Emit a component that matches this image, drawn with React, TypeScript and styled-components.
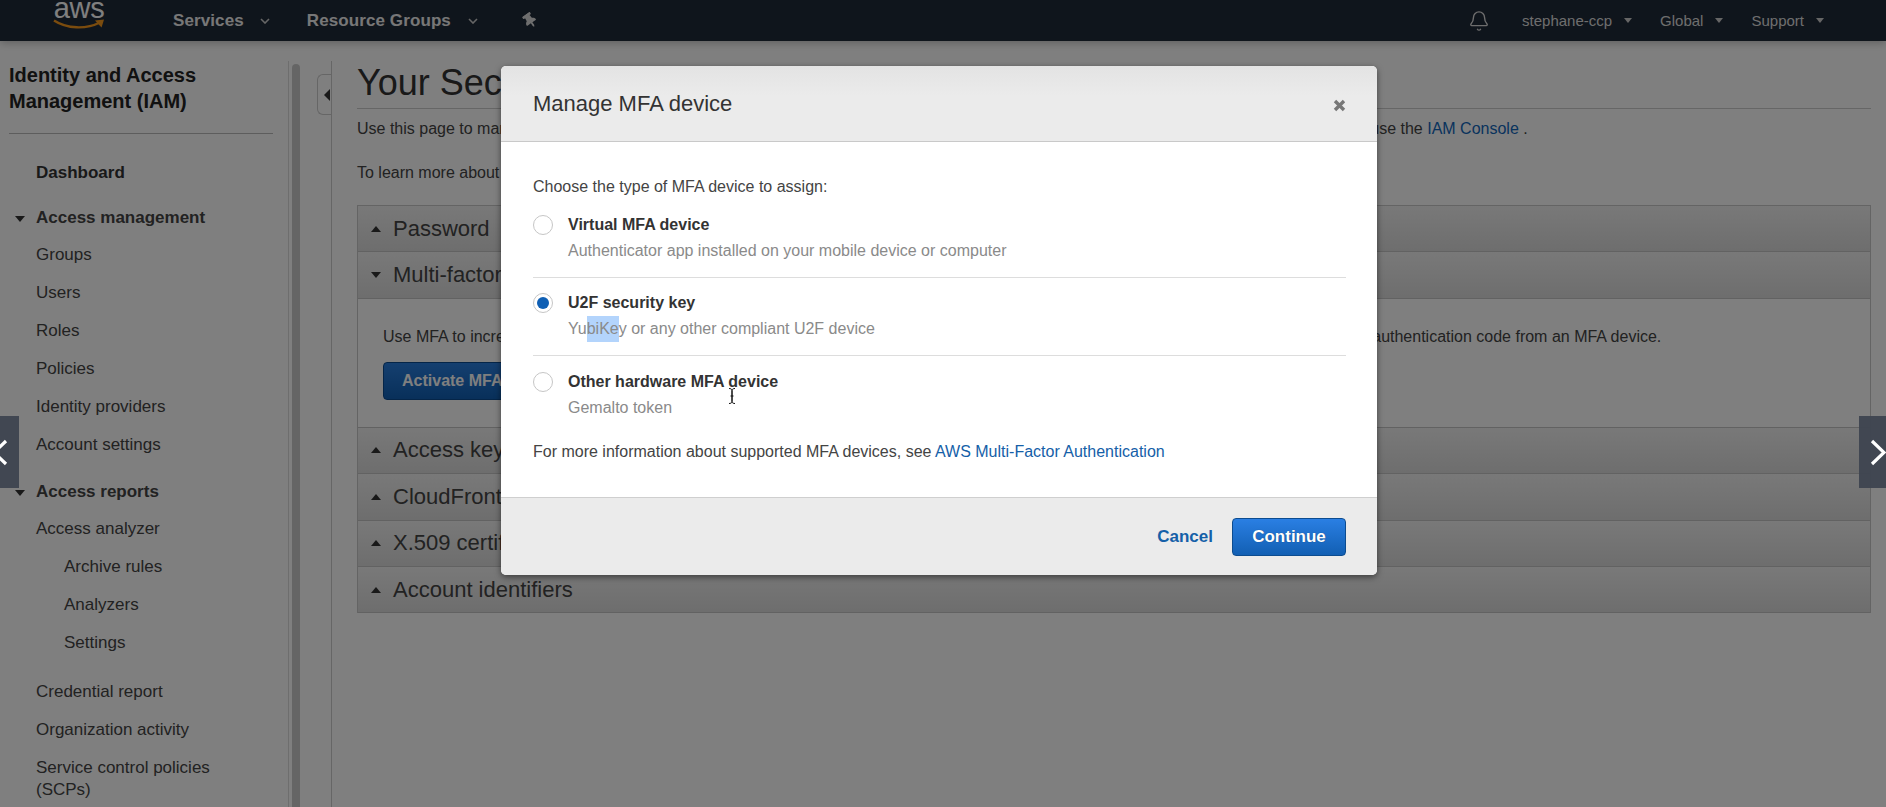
import React from "react";
import styled, { createGlobalStyle } from "styled-components";
import { Bell } from "lucide-react";
import { FaThumbtack } from "react-icons/fa";

const Global = createGlobalStyle`
  html, body { margin: 0; padding: 0; height: 100%; overflow: hidden; background: #fff; }
  body { font-family: "Liberation Sans", Arial, sans-serif; font-size: 16px; color: #444; }
  * { box-sizing: border-box; }
`;

const Page = styled.div`
  position: relative;
  width: 100vw;
  height: 100vh;
  overflow: hidden;
  display: flex;
  flex-direction: column;
`;

const TopBar = styled.header`
  height: 41px;
  flex: none;
  display: flex;
  align-items: center;
  background: #1f2a38;
  color: #fff;
  box-shadow: 0 2px 8px rgba(0, 0, 0, 0.25);
  position: relative;
  z-index: 1;
`;
const Logo = styled.div`
  width: 52px;
  height: 41px;
  margin-left: 53px;
  position: relative;
  overflow: hidden;
  flex: none;
`;
const LogoWord = styled.span`
  display: block;
  font-size: 29px;
  line-height: 22px;
  margin-top: -3px;
  text-align: center;
  letter-spacing: -0.3px;
  color: #fff;
`;
const Smile = styled.svg`
  display: block;
  width: 52px;
  height: 12px;
  margin-top: -1px;
`;
const MenuLabel = styled.span<{ $left: number }>`
  margin-left: ${(p) => p.$left}px;
  font-size: 17px;
  font-weight: bold;
  color: #eee;
  letter-spacing: 0.1px;
  white-space: nowrap;
`;
const MenuChevron = styled.svg<{ $left: number }>`
  margin-left: ${(p) => p.$left}px;
  width: 10px;
  height: 6px;
  flex: none;
`;
const PinIcon = styled(FaThumbtack)`
  margin-left: 45px;
  width: 14px;
  height: 15px;
  color: #ddd;
  transform: rotate(-35deg);
`;
const RightGroup = styled.div`
  margin-left: auto;
  display: flex;
  align-items: center;
  padding-right: 62px;
`;
const BellIcon = styled(Bell)`
  width: 22px;
  height: 22px;
  color: #ddd;
  stroke-width: 1.5;
  margin-right: 32px;
`;
const UserLabel = styled.span<{ $gap: number }>`
  font-size: 15px;
  color: #ddd;
  white-space: nowrap;
  margin-right: ${(p) => p.$gap}px;
`;
const UserCaret = styled.span<{ $gap: number }>`
  width: 0;
  height: 0;
  border-left: 4.5px solid transparent;
  border-right: 4.5px solid transparent;
  border-top: 5px solid #ccc;
  margin-right: ${(p) => p.$gap}px;
`;

const Body = styled.div`
  flex: 1;
  display: flex;
  min-height: 0;
  padding-top: 20px;
`;
const Sidebar = styled.aside`
  width: 289px;
  flex: none;
  border-right: 1px solid #ddd;
  padding: 1px 15px 0 9px;
  overflow: hidden;
`;
const SideTitle = styled.h2`
  margin: 0;
  font-size: 20px;
  line-height: 26px;
  font-weight: bold;
  color: #222;
`;
const SideRule = styled.hr`
  margin: 19px 0 20px;
  border: 0;
  border-top: 1px solid #bbb;
`;
const NavLink = styled.div<{ $indent?: number; $top?: number }>`
  min-height: 38px;
  line-height: 38px;
  padding-left: ${(p) => p.$indent ?? 27}px;
  margin-top: ${(p) => p.$top ?? 0}px;
  font-size: 17px;
  color: #444;
  white-space: nowrap;
`;
const NavLead = styled(NavLink)`
  font-weight: bold;
  color: #333;
`;
const NavGroup = styled.div<{ $top: number }>`
  height: 36px;
  margin-top: ${(p) => p.$top}px;
  display: flex;
  align-items: center;
  font-size: 17px;
  font-weight: bold;
  color: #444;
`;
const DownCaret = styled.span`
  width: 0;
  height: 0;
  border-left: 5.5px solid transparent;
  border-right: 5.5px solid transparent;
  border-top: 6px solid #333;
  margin: 2px 11px 0 6px;
`;
const WrappedNav = styled.div`
  padding: 8px 0 0 27px;
  font-size: 17px;
  line-height: 22px;
  color: #444;
`;
const ScrollTrack = styled.div`
  width: 13px;
  flex: none;
  padding: 3px 2px 0 3px;
`;
const ScrollThumb = styled.div`
  height: 100%;
  background: #cbcbcb;
  border-radius: 4px 4px 0 0;
`;
const Gutter = styled.div`
  width: 30px;
  flex: none;
  border-right: 1px solid #ccc;
  padding: 13px 0 0 14px;
`;
const CollapseTab = styled.div`
  width: 15px;
  height: 41px;
  margin-left: 1px;
  border: 1px solid #ccc;
  border-right: 0;
  border-radius: 6px 0 0 6px;
  display: flex;
  align-items: center;
  justify-content: flex-end;
  padding-right: 2px;
`;
const TabArrow = styled.span`
  width: 0;
  height: 0;
  border-top: 6px solid transparent;
  border-bottom: 6px solid transparent;
  border-right: 6px solid #333;
`;
const Content = styled.main`
  flex: 1;
  min-width: 0;
  padding: 0 15px 0 25px;
`;
const Heading = styled.h1`
  margin: 0;
  font-size: 36px;
  line-height: 44px;
  height: 48px;
  font-weight: normal;
  color: #333;
  border-bottom: 1px solid #ccc;
  white-space: nowrap;
`;
const Para = styled.p<{ $top: number }>`
  margin: ${(p) => p.$top}px 0 0;
  font-size: 16px;
  line-height: 22px;
  color: #444;
  white-space: nowrap;
`;
const PageLink = styled.a`
  color: #1166bb;
`;
const Accordion = styled.div`
  margin-top: 21px;
  border: 1px solid #c8c8c8;
  border-bottom: 0;
`;
const PanelHead = styled.div`
  height: 46.4px;
  display: flex;
  align-items: center;
  padding-left: 13px;
  font-size: 22px;
  color: #444;
  background: linear-gradient(#f2f2f2, #dcdcdc);
  border-bottom: 1px solid #c4c4c4;
  white-space: nowrap;
`;
const HeadCaret = styled.span<{ $open?: boolean }>`
  width: 0;
  height: 0;
  border-left: 5.5px solid transparent;
  border-right: 5.5px solid transparent;
  ${(p) => (p.$open ? "border-top: 6px solid #333;" : "border-bottom: 6px solid #333;")}
  margin-right: 12px;
`;
const PanelBody = styled.div`
  height: 129px;
  padding: 27px 0 0 25px;
  border-bottom: 1px solid #c4c4c4;
`;
const BodyText = styled.p`
  margin: 0;
  font-size: 16px;
  line-height: 22px;
  color: #444;
  white-space: nowrap;
`;
const ActivateButton = styled.button`
  display: block;
  margin-top: 14px;
  width: 190px;
  height: 38px;
  padding: 0 0 0 18px;
  text-align: left;
  font: bold 16px "Liberation Sans", Arial, sans-serif;
  color: #fff;
  background: linear-gradient(#2a7fe0, #1160b4);
  border: 1px solid #0b4a90;
  border-radius: 4px;
`;

const Overlay = styled.div`
  position: absolute;
  inset: 0;
  z-index: 5;
  background: rgba(0, 0, 0, 0.5);
`;
const Modal = styled.div`
  position: absolute;
  z-index: 6;
  left: 501px;
  top: 66px;
  width: 876px;
  background: #fff;
  border-radius: 5px;
  box-shadow: 0 2px 6px rgba(0, 0, 0, 0.5);
  overflow: hidden;
`;
const ModalHead = styled.div`
  height: 76px;
  display: flex;
  align-items: center;
  justify-content: space-between;
  padding: 1px 31px 0 32px;
  background: linear-gradient(#e3e3e3, #ebebeb 40%);
  border-bottom: 1px solid #c9c9c9;
`;
const ModalTitle = styled.h3`
  margin: 0;
  font-size: 22px;
  font-weight: normal;
  color: #333;
`;
const CloseIcon = styled.svg`
  width: 13px;
  height: 13px;
  margin-top: 2px;
`;
const ModalMain = styled.div`
  padding: 34px 31px 34px 32px;
`;
const Intro = styled.p`
  margin: 0 0 14px;
  font-size: 16px;
  line-height: 22px;
  color: #444;
`;
const Option = styled.label<{ $last?: boolean; $pad: number }>`
  display: flex;
  gap: 15px;
  padding-top: ${(p) => p.$pad}px;
  padding-bottom: ${(p) => (p.$last ? 0 : 13)}px;
  border-bottom: ${(p) => (p.$last ? "0" : "1px solid #ddd")};
  margin-top: ${(p) => (p.$pad === 0 ? 0 : 0)}px;
`;
const Radio = styled.span<{ $on?: boolean }>`
  width: 20px;
  height: 20px;
  flex: none;
  margin-top: 3px;
  border: 1px solid #c6c6c6;
  border-radius: 50%;
  background: #fff;
  display: flex;
  align-items: center;
  justify-content: center;
  &::after {
    content: "";
    width: 12px;
    height: 12px;
    border-radius: 50%;
    background: ${(p) => (p.$on ? "#0f5fb4" : "transparent")};
  }
`;
const OptionText = styled.div`
  line-height: 26px;
  font-size: 16px;
`;
const OptionName = styled.div`
  font-weight: bold;
  color: #333;
`;
const OptionHint = styled.div`
  color: #8a8a8a;
`;
const Selected = styled.span`
  display: inline-block;
  line-height: 26px;
  background: #b3d4fc;
`;
const MoreInfo = styled.p`
  margin: 20px 0 0;
  font-size: 16px;
  line-height: 22px;
  color: #444;
`;
const InfoLink = styled.a`
  color: #1560a8;
`;
const ModalFoot = styled.div`
  height: 78px;
  display: flex;
  align-items: center;
  justify-content: flex-end;
  gap: 19px;
  padding: 0 31px;
  background: #ebebeb;
  border-top: 1px solid #cfcfcf;
`;
const CancelLink = styled.a`
  font-size: 17px;
  font-weight: bold;
  color: #1560a8;
`;
const ContinueButton = styled.button`
  width: 114px;
  height: 38px;
  padding: 0;
  font: bold 17px "Liberation Sans", Arial, sans-serif;
  color: #fff;
  text-shadow: 0 0 1px rgba(0, 0, 0, 0.4);
  background: linear-gradient(#2a7fe3, #125fb3);
  border: 1px solid #0c4c90;
  border-radius: 4px;
`;
const TextCursor = styled.svg`
  position: absolute;
  z-index: 7;
  left: 728px;
  top: 388px;
  width: 8px;
  height: 16px;
`;
const SlideArrow = styled.div<{ $side: "left" | "right" }>`
  position: absolute;
  z-index: 8;
  top: 416px;
  ${(p) => (p.$side === "left" ? "left: 0; width: 19px;" : "right: 0; width: 27px;")}
  height: 72px;
  background: rgba(62, 69, 80, 0.95);
  overflow: hidden;
`;
const SlideChevron = styled.svg`
  display: block;
  width: 100%;
  height: 100%;
`;

const Chevron = ({ left }: { left: number }) => (
  <MenuChevron $left={left} viewBox="0 0 10 6">
    <path d="M1 1l4 4 4-4" fill="none" stroke="#ccc" strokeWidth="1.6" />
  </MenuChevron>
);

const Head = ({ children, open }: { children: React.ReactNode; open?: boolean }) => (
  <PanelHead>
    <HeadCaret $open={open} />
    {children}
  </PanelHead>
);

export default function App() {
  return (
    <Page>
      <Global />
      <TopBar>
        <Logo>
          <LogoWord>aws</LogoWord>
          <Smile viewBox="0 0 52 12">
            <path d="M1 2.5C14 11 33 11.5 47 4.5" fill="none" stroke="#f7981d" strokeWidth="2.4" />
            <path d="M42 2.5l9-1-2.5 8z" fill="#f7981d" />
          </Smile>
        </Logo>
        <MenuLabel $left={68}>Services</MenuLabel>
        <Chevron left={16} />
        <MenuLabel $left={37}>Resource Groups</MenuLabel>
        <Chevron left={17} />
        <PinIcon />
        <RightGroup>
          <BellIcon />
          <UserLabel $gap={12}>stephane-ccp</UserLabel>
          <UserCaret $gap={28} />
          <UserLabel $gap={12}>Global</UserLabel>
          <UserCaret $gap={28} />
          <UserLabel $gap={12}>Support</UserLabel>
          <UserCaret $gap={0} />
        </RightGroup>
      </TopBar>

      <Body>
        <Sidebar>
          <SideTitle>
            Identity and Access
            <br />
            Management (IAM)
          </SideTitle>
          <SideRule />
          <NavLead>Dashboard</NavLead>
          <NavGroup $top={8}>
            <DownCaret />
            Access management
          </NavGroup>
          <NavLink>Groups</NavLink>
          <NavLink>Users</NavLink>
          <NavLink>Roles</NavLink>
          <NavLink>Policies</NavLink>
          <NavLink>Identity providers</NavLink>
          <NavLink>Account settings</NavLink>
          <NavGroup $top={10}>
            <DownCaret />
            Access reports
          </NavGroup>
          <NavLink>Access analyzer</NavLink>
          <NavLink $indent={55}>Archive rules</NavLink>
          <NavLink $indent={55}>Analyzers</NavLink>
          <NavLink $indent={55}>Settings</NavLink>
          <NavLink $top={11}>Credential report</NavLink>
          <NavLink>Organization activity</NavLink>
          <WrappedNav>
            Service control policies
            <br />
            (SCPs)
          </WrappedNav>
        </Sidebar>
        <ScrollTrack>
          <ScrollThumb />
        </ScrollTrack>
        <Gutter>
          <CollapseTab>
            <TabArrow />
          </CollapseTab>
        </Gutter>
        <Content>
          <Heading>Your Security Credentials</Heading>
          <Para $top={9}>
            Use this page to manage the credentials for your AWS account. To manage credentials for AWS Identity and
            Access Management (IAM) users, use the <PageLink>IAM Console</PageLink> .
          </Para>
          <Para $top={22}>
            To learn more about the types of AWS credentials and how they're used, see AWS Security Credentials in AWS
            General Reference.
          </Para>
          <Accordion>
            <Head>Password</Head>
            <Head open>Multi-factor authentication (MFA)</Head>
            <PanelBody>
              <BodyText>
                Use MFA to increase the security of your AWS environment. Signing in to MFA-protected accounts requires
                a user name, password, and an authentication code from an MFA device.
              </BodyText>
              <ActivateButton>Activate MFA</ActivateButton>
            </PanelBody>
            <Head>Access keys (access key ID and secret access key)</Head>
            <Head>CloudFront key pairs</Head>
            <Head>X.509 certificate</Head>
            <Head>Account identifiers</Head>
          </Accordion>
        </Content>
      </Body>

      <Overlay />

      <Modal>
        <ModalHead>
          <ModalTitle>Manage MFA device</ModalTitle>
          <CloseIcon viewBox="0 0 13 13">
            <path d="M2 2l9 9M11 2l-9 9" stroke="#777" strokeWidth="3.4" />
          </CloseIcon>
        </ModalHead>
        <ModalMain>
          <Intro>Choose the type of MFA device to assign:</Intro>
          <Option $pad={0}>
            <Radio />
            <OptionText>
              <OptionName>Virtual MFA device</OptionName>
              <OptionHint>Authenticator app installed on your mobile device or computer</OptionHint>
            </OptionText>
          </Option>
          <Option $pad={12}>
            <Radio $on />
            <OptionText>
              <OptionName>U2F security key</OptionName>
              <OptionHint>
                Yu<Selected>biKe</Selected>y or any other compliant U2F device
              </OptionHint>
            </OptionText>
          </Option>
          <Option $pad={13} $last>
            <Radio />
            <OptionText>
              <OptionName>Other hardware MFA device</OptionName>
              <OptionHint>Gemalto token</OptionHint>
            </OptionText>
          </Option>
          <MoreInfo>
            For more information about supported MFA devices, see <InfoLink>AWS Multi-Factor Authentication</InfoLink>
          </MoreInfo>
        </ModalMain>
        <ModalFoot>
          <CancelLink>Cancel</CancelLink>
          <ContinueButton>Continue</ContinueButton>
        </ModalFoot>
      </Modal>

      <TextCursor viewBox="0 0 8 16">
        <path d="M1 .5c1.5 0 3 .5 3 2v11c0 1.500-1.500 2-3 2M7 .5c-1.500 0-3 .5-3 2v11c0 1.500 1.500 2 3 2M2.500 8h3" fill="none" stroke="#111" strokeWidth="1" />
      </TextCursor>

      <SlideArrow $side="left">
        <SlideChevron viewBox="0 0 19 72">
          <path d="M6 25L-6 36.500 6 48" fill="none" stroke="#fff" strokeWidth="3.2" />
        </SlideChevron>
      </SlideArrow>
      <SlideArrow $side="right">
        <SlideChevron viewBox="0 0 27 72">
          <path d="M13 25l12 11.500L13 48" fill="none" stroke="#fff" strokeWidth="3.2" />
        </SlideChevron>
      </SlideArrow>
    </Page>
  );
}
